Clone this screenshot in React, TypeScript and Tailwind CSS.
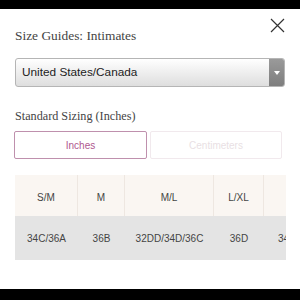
import React from "react";

const headers = [
  { label: "S/M", w: "w-[63px]" },
  { label: "M", w: "w-[47px]" },
  { label: "M/L", w: "w-[89px]" },
  { label: "L/XL", w: "w-[50px]" },
  { label: "XL", w: "w-[50px]" },
];
const sizes = ["34C/36A", "36B", "32DD/34D/36C", "36D", "34DD/36DD"];

export default function App() {
  return (
    <div className="flex h-[300px] w-[300px] flex-col overflow-hidden bg-white">
      <div className="h-[9px] shrink-0 bg-black" />
      <div className="relative flex-1 px-[15px]">
        <div className="pt-[18px] font-['Liberation_Serif',serif] text-[13.4px] leading-[18px] text-[#444]">
          Size Guides: Intimates
        </div>
        <button className="absolute right-[15px] top-[9px] h-[15px] w-[15px]" aria-label="close">
          <svg viewBox="0 0 15 15" className="h-[15px] w-[15px]" stroke="#333" strokeWidth="1.2" fill="none">
            <path d="M1 1 L14 14 M14 1 L1 14" />
          </svg>
        </button>

        <div className="mt-[13px] flex h-[29px] w-[270px] overflow-hidden rounded-[3px] border border-[#b5b5b5] bg-gradient-to-b from-white to-[#dedede]">
          <div className="flex flex-1 items-center pl-[6px] font-['Liberation_Sans',sans-serif] text-[11.8px] text-[#222]">
            United States/Canada
          </div>
          <div className="flex w-[15px] items-center justify-center bg-gradient-to-b from-[#9a9a9a] to-[#7e7e7e]">
            <div className="h-0 w-0 border-x-[3px] border-t-[4px] border-x-transparent border-t-white" />
          </div>
        </div>

        <div className="mt-[20px] font-['Liberation_Serif',serif] text-[12.2px] leading-[18px] text-[#444]">
          Standard Sizing (Inches)
        </div>

        <div className="mt-[6px] flex gap-[3px] font-['Liberation_Sans',sans-serif] text-[10px]">
          <div className="-ml-px flex h-[28px] w-[133px] items-center justify-center rounded-[2px] border border-[#bf90ad] text-[#b0578f]">
            Inches
          </div>
          <div className="flex h-[28px] w-[132px] items-center justify-center rounded-[2px] border border-[#f1e9ed] text-[#e9dfe4]">
            Centimeters
          </div>
        </div>

        <div className="mt-[16px] w-[271px] overflow-hidden font-['Liberation_Sans',sans-serif] text-[10px] text-[#444]">
          <div className="flex w-max bg-[#faf6f2]">
            {headers.map((h, i) => (
              <div
                key={h.label}
                className={`${h.w} flex h-[41px] shrink-0 items-center justify-center pt-[3px] ${i < headers.length - 1 ? "border-r border-[#eee7e1]" : ""}`}
              >
                {i < 4 ? h.label : ""}
              </div>
            ))}
          </div>
          <div className="flex h-[44px] w-max bg-[#e4e4e4]">
            {sizes.map((s, i) => (
              <div key={s} className={`${headers[i].w} flex shrink-0 items-center pt-[1px] ${i === 4 ? "pl-[14px]" : "justify-center"}`}>
                {s}
              </div>
            ))}
          </div>
        </div>
      </div>
      <div className="h-[11px] shrink-0 bg-black" />
    </div>
  );
}
